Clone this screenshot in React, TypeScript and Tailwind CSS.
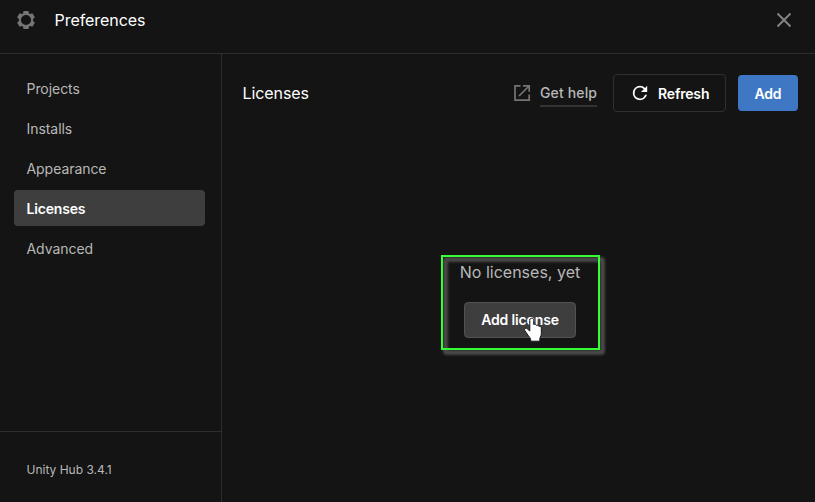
const NAV = ['Projects', 'Installs', 'Appearance', 'Licenses', 'Advanced'];

function Gear() {
  return (
    <svg width="20" height="20" viewBox="0 0 20 20" fill="#747474" fillRule="evenodd">
      <path d="M7.500 1h5l.5 2.400 1 .6 2.400-.8 2.500 4-1.800 1.700v2.200l1.800 1.700-2.500 4-2.400-.8-1 .6-.5 2.400h-5L7 16.600l-1-.6-2.400.8-2.500-4 1.800-1.700V8.900L1.100 7.200l2.500-4L6 4l1-.6zM10 4.900a5.100 5.100 0 1 0 0 10.200a5.100 5.100 0 0 0 0-10.200z" />
    </svg>
  );
}

function Hand() {
  return (
    <svg className="absolute left-[82px] top-[62px]" width="20" height="26" viewBox="0 0 20 26">
      <path
        d="M6.800 3.200C6.800.6 10.700.6 10.700 3.200V7.500c.9-.6 2.400-.3 2.700.9.900-.5 2.300-.2 2.600 1 1-.4 2.300.3 2.300 1.700v5.600c0 1.500-.5 2.400-1 3.400-.4.800-.5 1.200-.5 2.600v1.500H7.700V22.700c-.2-1.500-1.100-2.400-2.300-4L2 13.900c-1.200-1.900.6-3.400 2.300-2.100L6.800 14z"
        fill="#fff"
        stroke="#151520"
        strokeWidth="1"
      />
    </svg>
  );
}

export default function App() {
  return (
    <div className="flex h-[502px] w-[815px] flex-col overflow-hidden bg-[#141414] font-['Inter',sans-serif] text-sm text-[#b8b8b8]">
      <header className="flex h-[54px] shrink-0 items-start border-b border-[#2d2d2d] pl-4 pr-[21px] pt-2">
        <div className="mr-[0.500px] mt-0.5 flex h-5 w-5 items-center"><Gear /></div>
        <h1 className="ml-[18px] text-base leading-6 tracking-[-0.003em] text-white">Preferences</h1>
        <svg className="ml-auto mt-0.5" width="20" height="20" viewBox="0 0 20 20" stroke="#858585" strokeWidth="1.900">
          <path d="M3.500 3.500l13 13M16.500 3.500l-13 13" />
        </svg>
      </header>
      <div className="flex min-h-0 flex-1">
        <aside className="flex w-[222px] shrink-0 flex-col border-r border-[#2d2d2d]">
          <nav className="flex flex-1 flex-col gap-1 pl-3.5 pr-4 pt-4">
            {NAV.map((item) => (
              <a
                key={item}
                className={
                  item === 'Licenses'
                    ? 'flex h-9 items-center rounded bg-[#3e3e3e] pl-[12.500px] pt-0.5 font-semibold tracking-[-0.012em] text-white'
                    : 'flex h-9 items-center pl-[12.500px] pt-0.5 tracking-[-0.004em]'
                }
              >
                {item}
              </a>
            ))}
          </nav>
          <footer className="flex h-[71px] items-center border-t border-[#2d2d2d] pl-[26.500px] pt-1.5 text-xs">Unity Hub 3.4.1</footer>
        </aside>
        <main className="flex flex-1 flex-col">
          <div className="flex items-center pl-[20.500px] pr-[17px] pt-5">
            <h2 className="text-base tracking-[-0.005em] text-white">Licenses</h2>
            <svg className="ml-auto" width="18" height="18" viewBox="0 0 18 18" fill="none" stroke="#747474" strokeWidth="1.700">
              <path d="M7.500 1.800H2v14.400h14.200V10.500M10 1.800h6.200v6M16 2L6 12" />
            </svg>
            <a className="ml-[9px] mt-[3px] w-[57px] whitespace-nowrap border-b-2 border-[#333] pb-0.5 font-medium tracking-[0.010em]">Get help</a>
            <button className="ml-4 flex h-[38px] w-[113px] items-center rounded border border-[#303030] pl-[17px] pt-px font-semibold tracking-[-0.012em] text-white">
              <svg className="-mt-px" width="18" height="18" viewBox="2 2 20 20" fill="#fff">
                <path d="M17.650 6.350A7.960 7.960 0 0 0 12 4a8 8 0 1 0 7.730 10h-2.080A6 6 0 1 1 12 6c1.660 0 3.140.69 4.220 1.780L13 11h7V4z" />
              </svg>
              <span className="ml-[9px]">Refresh</span>
            </button>
            <button className="ml-3 h-9 w-[60px] rounded bg-[#3e78c4] pt-0.5 font-semibold tracking-[-0.015em] text-white">Add</button>
          </div>
          <div className="relative ml-[219px] mt-[143px] flex h-[95px] w-[159px] flex-col items-center">
            <div className="absolute left-[2px] top-[2px] h-[98px] w-[162px] rounded-sm border-[5px] border-[#484848] blur-[1.200px]" />
            <div className="absolute inset-0 border-2 border-[#33ff33]" />
            <p className="relative mr-px mt-[5px] whitespace-nowrap text-base leading-6">No licenses, yet</p>
            <button className="relative mr-px mt-[18px] h-9 w-28 rounded border border-[#525252] bg-[#3e3e3e] font-semibold tracking-[-0.010em] text-white">Add license</button>
            <Hand />
          </div>
        </main>
      </div>
    </div>
  );
}
